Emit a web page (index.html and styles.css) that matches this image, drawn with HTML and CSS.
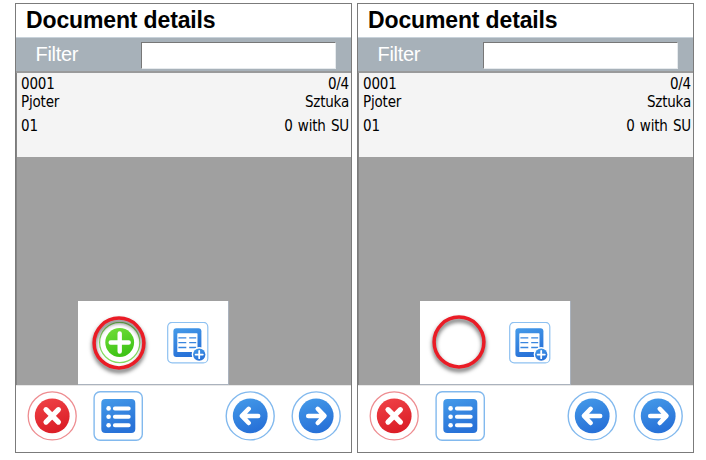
FILE: index.html
```html
<!DOCTYPE html>
<html lang="en">
<head>
<meta charset="utf-8">
<title>Document details</title>
<link rel="stylesheet" href="styles.css">
</head>
<body>
<svg class="defs" aria-hidden="true">
  <defs>
    <linearGradient id="blue" x1="0" y1="0" x2=".35" y2="1"><stop offset="0" stop-color="#459be9"/><stop offset="1" stop-color="#2872d8"/></linearGradient>
    <linearGradient id="red" x1="0" y1="0" x2=".35" y2="1"><stop offset="0" stop-color="#f04448"/><stop offset="1" stop-color="#dc1f28"/></linearGradient>
    <linearGradient id="green" x1="0" y1="0" x2=".35" y2="1"><stop offset="0" stop-color="#72de38"/><stop offset="1" stop-color="#3fc417"/></linearGradient>
    <symbol id="cancel" viewBox="0 0 50 50">
      <circle cx="25.2" cy="24.9" r="24" fill="#fff" stroke="#ee8d91" stroke-width="1.3"/>
      <circle cx="25.2" cy="24.9" r="17.4" fill="url(#red)"/>
      <path d="M19 18.7 31.4 31.1M31.4 18.7 19 31.1" stroke="#fff" stroke-width="5.2" stroke-linecap="round"/>
    </symbol>
    <symbol id="list" viewBox="0 0 50 50">
      <rect x="1.1" y=".7" width="48.2" height="48.6" rx="6" fill="#fff" stroke="#82b9ee" stroke-width="1.4"/>
      <rect x="8.3" y="8" width="34" height="34" rx="4" fill="url(#blue)"/>
      <g fill="#fff"><circle cx="15.6" cy="17.4" r="2.3"/><circle cx="15.6" cy="25.8" r="2.3"/><circle cx="15.6" cy="34.2" r="2.3"/></g>
      <path d="M21.9 17.4h13.8M21.9 25.8h13.8M21.9 34.2h13.8" stroke="#fff" stroke-width="4" stroke-linecap="round"/>
    </symbol>
    <symbol id="arrow-left" viewBox="0 0 50 50">
      <circle cx="25.2" cy="24.9" r="24" fill="#fff" stroke="#82b9ee" stroke-width="1.4"/>
      <circle cx="25.2" cy="24.9" r="17.4" fill="url(#blue)"/>
      <path d="M33.2 24.9H17.5M23.7 17.8 16.9 24.9 23.7 32" fill="none" stroke="#fff" stroke-width="4.5" stroke-linecap="round" stroke-linejoin="round"/>
    </symbol>
    <symbol id="arrow-right" viewBox="0 0 50 50">
      <circle cx="25.2" cy="24.9" r="24" fill="#fff" stroke="#82b9ee" stroke-width="1.4"/>
      <circle cx="25.2" cy="24.9" r="17.4" fill="url(#blue)"/>
      <path d="M17.2 24.9H32.9M26.7 17.8 33.5 24.9 26.7 32" fill="none" stroke="#fff" stroke-width="4.5" stroke-linecap="round" stroke-linejoin="round"/>
    </symbol>
    <symbol id="add" viewBox="0 0 42 42">
      <circle cx="20.7" cy="20.5" r="20.1" fill="#fff" stroke="#83dc60" stroke-width="1.2"/>
      <circle cx="20.7" cy="20.5" r="14.4" fill="url(#green)"/>
      <path d="M11.7 20.5h18M20.7 11.5v18" stroke="#fff" stroke-width="4.4" stroke-linecap="round"/>
    </symbol>
    <symbol id="list-add" viewBox="0 0 42 42">
      <rect x=".7" y=".3" width="40.1" height="40.6" rx="4.5" fill="#fff" stroke="#8ec1f1" stroke-width="1.2"/>
      <rect x="6.4" y="6.3" width="28" height="28.6" rx="3" fill="url(#blue)"/>
      <rect x="10.3" y="11.3" width="20.2" height="18.8" rx=".6" fill="#fff"/>
      <path d="M11.4 15.8h7.9M22.2 15.8h7M11.4 20.6h7.9M22.2 20.6h7M11.4 25.5h7.9M22.2 25.5h7" stroke="#3986df" stroke-width="1.3"/>
      <circle cx="32.2" cy="32.6" r="7.5" fill="#fff"/>
      <circle cx="32.2" cy="32.6" r="6.2" fill="url(#blue)"/>
      <path d="M28.6 32.6h7.2M32.2 29v7.2" stroke="#fff" stroke-width="1.8" stroke-linecap="round"/>
    </symbol>
    <symbol id="highlight" viewBox="0 0 64 64">
      <circle cx="32" cy="32" r="24.9" fill="none" stroke="#ea1c26" stroke-width="3.5"/>
    </symbol>
  </defs>
</svg>
<main class="screens">
  <section class="screen">
    <h1 class="title">Document details</h1>
    <div class="filter"><label for="f1">Filter</label><input id="f1" class="filter-input" type="text"></div>
    <div class="content">
      <div class="item">
        <div class="row"><span>0001</span><span>0/4</span></div>
        <div class="row"><span>Pjoter</span><span>Sztuka</span></div>
        <div class="row row-last"><span>01</span><span class="amount">0 with SU</span></div>
      </div>
      <div class="popup">
        <svg class="icon-small"><use href="#add"/></svg>
        <svg class="icon-small"><use href="#list-add"/></svg>
        <svg class="highlight"><use href="#highlight"/></svg>
      </div>
    </div>
    <div class="toolbar">
      <svg class="icon"><use href="#cancel"/></svg>
      <svg class="icon"><use href="#list"/></svg>
      <svg class="icon back"><use href="#arrow-left"/></svg>
      <svg class="icon"><use href="#arrow-right"/></svg>
    </div>
  </section>
  <section class="screen">
    <h1 class="title">Document details</h1>
    <div class="filter"><label for="f2">Filter</label><input id="f2" class="filter-input" type="text"></div>
    <div class="content">
      <div class="item">
        <div class="row"><span>0001</span><span>0/4</span></div>
        <div class="row"><span>Pjoter</span><span>Sztuka</span></div>
        <div class="row row-last"><span>01</span><span class="amount">0 with SU</span></div>
      </div>
      <div class="popup">
        <span class="icon-small"></span>
        <svg class="icon-small"><use href="#list-add"/></svg>
        <svg class="highlight highlight-empty"><use href="#highlight"/></svg>
      </div>
    </div>
    <div class="toolbar">
      <svg class="icon"><use href="#cancel"/></svg>
      <svg class="icon"><use href="#list"/></svg>
      <svg class="icon back"><use href="#arrow-left"/></svg>
      <svg class="icon"><use href="#arrow-right"/></svg>
    </div>
  </section>
</main>
</body>
</html>
```
FILE: styles.css
```css
* { box-sizing: border-box; }
body { margin: 0; background: #fff; color: #000; font-family: "Liberation Sans", sans-serif; }
.defs { position: absolute; width: 0; height: 0; }
.screens { display: flex; gap: 5px; padding: 3px 0 0 15px; }
.screen {
  display: flex; flex-direction: column;
  width: 337px; height: 450px;
  border: 1px solid #7b7b7b; background: #fff;
}
.title { height: 33px; margin: 0; padding-left: 10px; font-size: 23px; font-weight: bold; line-height: 33px; letter-spacing: -0.14px; }
.filter {
  display: flex; align-items: flex-start;
  height: 36px; padding: 4px 0 0 20px;
  border-top: 1px solid #c8d2da; border-bottom: 2px solid #999a9b;
  background: #a7b1b9; color: #fff;
}
.filter label { width: 105px; margin-left: -0.5px; margin-right: 0.5px; font-size: 20px; line-height: 25px; letter-spacing: -0.3px; }
.filter-input {
  width: 195px; height: 27px; margin: 0; padding: 0 4px;
  border: 1px solid; border-color: #777 #e6eaed #e6eaed #777; border-radius: 0;
  background: #fff; font: 18px "Liberation Sans", sans-serif; outline: 0;
}
.content { position: relative; height: 312px; border-left: 1px solid #858585; background: #a0a0a0; }
.item {
  height: 84px; padding: 2px 2px 0 4px; background: #f4f4f4;
  font: 15px/18px "DejaVu Sans Condensed", "DejaVu Sans", sans-serif; font-stretch: condensed;
  letter-spacing: -0.2px;
}
.row { display: flex; justify-content: space-between; }
.row-last { margin-top: 6px; }
.amount { word-spacing: 1.2px; }
.popup {
  position: absolute; left: 61px; bottom: 0;
  display: flex; gap: 26px; width: 151px; height: 84px; padding: 21px 0 0 21px;
  border-right: 1px solid #aab2bd; border-bottom: 1px solid #aab2bd; background: #fff;
}
.icon-small { flex: none; width: 42px; height: 42px; }
.highlight {
  position: absolute; left: 9.4px; top: 9.5px; width: 64px; height: 64px;
  filter: drop-shadow(0 3px 2px rgb(0 0 0 / 65%));
}
.highlight-empty { left: 7.4px; top: 8.7px; }
.toolbar { display: flex; height: 67px; padding: 5px 10px 0 11px; border-top: 1px solid #e8e8e8; }
.icon { flex: none; width: 50px; height: 50px; }
.icon + .icon { margin-left: 16px; }
.toolbar .back { margin-left: auto; }
```
